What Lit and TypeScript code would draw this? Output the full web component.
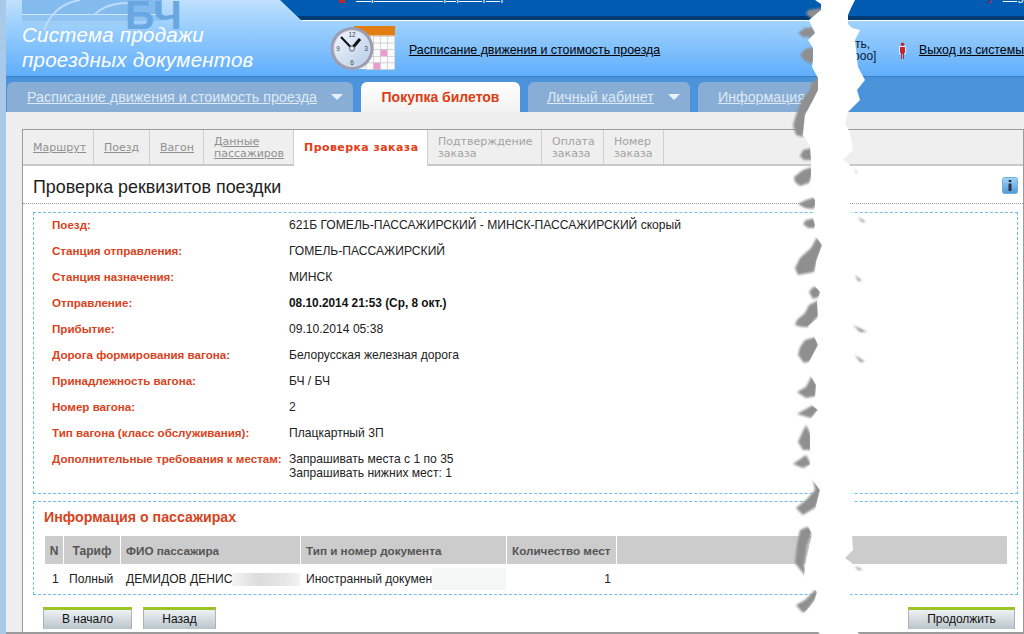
import { LitElement, html, css, svg } from "lit";
import { customElement } from "lit/decorators.js";

const rows: [string, unknown, boolean?][] = [
  ["Поезд:", "621Б ГОМЕЛЬ-ПАССАЖИРСКИЙ - МИНСК-ПАССАЖИРСКИЙ скорый"],
  ["Станция отправления:", "ГОМЕЛЬ-ПАССАЖИРСКИЙ"],
  ["Станция назначения:", "МИНСК"],
  ["Отправление:", "08.10.2014 21:53 (Ср, 8 окт.)", true],
  ["Прибытие:", "09.10.2014 05:38"],
  ["Дорога формирования вагона:", "Белорусская железная дорога"],
  ["Принадлежность вагона:", "БЧ / БЧ"],
  ["Номер вагона:", "2"],
  ["Тип вагона (класс обслуживания):", "Плацкартный 3П"],
  ["Дополнительные требования к местам:", html`Запрашивать места с 1 по 35<br />Запрашивать нижних мест: 1`],
];

const steps = [
  { t: "Маршрут", w: 71, link: true },
  { t: "Поезд", w: 56, link: true },
  { t: "Вагон", w: 54, link: true },
  { t: html`Данные<br />пассажиров`, w: 90, link: true },
  { t: "Проверка заказа", w: 134, active: true },
  { t: html`Подтверждение<br />заказа`, w: 114 },
  { t: html`Оплата<br />заказа`, w: 62 },
  { t: html`Номер<br />заказа`, w: 60 },
];

const blobs = [
  "822,8 808,10 806,14 811,18 822,18",
  "816,27 805,28 798,33 803,37 809,37 812,42 816,36",
  "814,47 805,49 800,55 804,60 810,64 814,62",
  "819,76 811,84 810,90 803,98 797,112 793,125 796,135 803,137 806,115 814,100 819,90",
  "812,148 803,150 800,156 804,160 812,160",
  "812,167 803,170 794,177 795,182 800,186 809,183 812,175",
  "816,197 806,200 798,204 805,208 813,209 816,205",
  "816,218 806,220 803,224 808,228 816,228",
  "817,237 823,245 818,258 814,272 798,275 795,268 800,258 811,248",
  "813,287 809,292 813,299 821,296 820,287",
  "819,300 809,305 805,313 797,320 795,325 802,327 809,327 819,315",
  "816,337 805,340 800,347 798,355 804,363 811,361 819,345",
  "812,375 817,385 816,396 806,398 797,392 806,387",
  "813,405 819,409 811,418 797,414",
  "806,425 802,433 798,442 803,450 811,450 811,435",
  "806,455 793,464 803,468 811,464",
  "813,478 821,490 816,507 803,515 796,508 806,500 815,490",
  "807,527 813,530 807,545 804,565 806,577 795,563 797,545 800,530",
  "818,587 805,600 796,605 802,612 806,612 816,598",
];

const leftEdge =
  "815,0 821,4 821,10 815,15 809,20 812,27 815,33 808,40 813,48 813,60 812,67 818,78 818,90 813,100 805,115 803,135 810,146 811,160 811,180 808,190 815,200 815,208 812,215 815,225 813,232 822,245 816,262 815,275 812,283 820,292 817,302 818,318 808,326 812,332 818,345 810,360 806,368 816,385 815,398 808,402 818,410 810,420 810,450 810,465 805,470 820,490 815,510 806,520 812,535 806,560 804,577 810,585 817,592 814,602 805,612 812,625 820,634";
const rightEdge =
  "860,634 858,633 850,594 852,563 845,558 853,550 852,535 854,501 852,493 852,212 850,204 850,165 843,160 853,150 850,133 845,123 848,112 860,100 857,90 865,80 858,67 855,40 860,30 852,28 848,24 848,15 851,8 855,0";
const slivers = [
  "855,168 857,173 856,173",
  "858,217 866,222 862,222",
  "855,275 862,281 858,281",
  "853,325 867,332 860,332",
  "855,355 865,362 860,362",
  "855,566 863,570 858,570",
];

@customElement("app-root")
export class AppRoot extends LitElement {
  static styles = css`
    :host {
      display: block;
      width: 1024px;
      height: 634px;
      position: relative;
      overflow: hidden;
      background: #a8c9e7;
      font-family: "Liberation Sans", Arial, sans-serif;
      font-size: 12px;
      color: #111;
    }
    a { color: inherit; }
    .shell {
      box-sizing: border-box;
      margin-left: 6px;
      height: 634px;
      background: #eeeeee;
      border-bottom: 2px solid #9b9b9b;
      display: flex;
      flex-direction: column;
    }
    .header {
      position: relative;
      height: 76px;
      flex: none;
      background: linear-gradient(#c0e0fd 0, #9dd0fd 25px, #60aefb 76px);
    }
    .logo { position: absolute; left: 16px; top: 0; }
    .logo text { font-family: "Liberation Sans", sans-serif; font-weight: 700; font-size: 41px; fill: #69a7e2; }
    .topbar {
      position: relative;
      height: 21px;
      margin-left: 274px;
      overflow: hidden;
      display: flex;
      padding-left: 59px;
      color: #fff;
      background: linear-gradient(#005bb1 0 16px, #003b74 16px 20px, #fff 20px 21px);
      clip-path: polygon(0 0, 100% 0, 100% 100%, 22px 100%);
    }
    .topbar > * { margin-top: -11px; line-height: 14px; font-size: 12px; height: 14px; white-space: nowrap; }
    .flag { width: 6px; background: #c3262b; margin-right: 11px; }
    .toplink { color: #fff; width: 154px; overflow: hidden; }
    .date { margin-left: 373px; width: 87px; }
    .lang { margin-left: 16px; color: #e4002b; width: 24px; }
    .eng { color: #fff; }
    .brand {
      position: relative;
      flex: 1;
      height: 55px;
      display: flex;
      align-items: center;
    }
    .title {
      width: 310px;
      margin-left: 16px;
      margin-top: -3px;
      color: #fff;
      font: italic 20.5px/25px "Liberation Sans", sans-serif;
      letter-spacing: 0.25px;
    }
    .clock { width: 66px; height: 46px; margin-left: 2px; margin-top: -1px; flex: none; }
    .brand-link { margin-left: 13px; width: 440px; font-size: 12.4px; color: #000; margin-top: 3px; }
    .who { width: 27px; line-height: 12px; text-align: right; font-size: 12px; color: #0a1a33; margin-top: 2px; }
    .person { margin-left: 29px; margin-top: 3px; flex: none; }
    .logout { margin-left: 13px; white-space: nowrap; font-size: 12.3px; color: #000; margin-top: 3px; }
    .nav {
      flex: none;
      height: 36px;
      box-sizing: border-box;
      background: #4b94db;
      border-top: 1px solid #3b7fc4;
      padding: 5px 0 0 1px;
      display: flex;
      gap: 8px;
    }
    .tab {
      box-sizing: border-box;
      height: 30px;
      border-radius: 6px 6px 0 0;
      background: #88aed5;
      color: #dfeaf5;
      font-size: 14.2px;
      line-height: 29px;
      padding-left: 20px;
      white-space: nowrap;
      display: flex;
      align-items: center;
    }
    .tab.first { font-size: 14.3px; }
    .tab.on {
      background: linear-gradient(#fff, #f2f2f2);
      color: #de3c12;
      font-size: 14px;
      font-weight: 700;
      justify-content: center;
      padding: 0;
    }
    .tri { width: 0; height: 0; margin-left: 14px; border: 6px solid transparent; border-top: 6px solid #e8f0f8; border-bottom: 0; }
    .panel {
      box-sizing: border-box;
      margin: 17px 0 0 16px;
      flex: 1;
      background: #fff;
      border: 1px solid #9b9b9b;
      border-bottom: 0;
      display: flex;
      flex-direction: column;
    }
    .steps {
      height: 36px;
      flex: none;
      box-sizing: border-box;
      background: #efefef;
      border-bottom: 2px solid #c9c9c9;
      display: flex;
      font-family: "DejaVu Sans", Verdana, sans-serif;
      font-size: 11px;
      line-height: 12px;
      color: #a3a3a3;
    }
    .step {
      box-sizing: border-box;
      height: 34px;
      border-right: 1px solid #cfcfcf;
      padding: 2px 0 0 10px;
      display: flex;
      align-items: center;
      white-space: nowrap;
    }
    .step.link { color: #8f8f8f; text-decoration: underline; }
    .step.active {
      height: 36px;
      background: #fff;
      color: #e43d16;
      font-weight: 700;
      text-decoration: none;
      letter-spacing: 0.42px;
      padding: 1px 0 1px 10px;
      border-right: 1px solid #cfcfcf;
    }
    .heading {
      height: 38px;
      flex: none;
      box-sizing: border-box;
      display: flex;
      align-items: center;
      justify-content: space-between;
      padding: 4px 5px 0 10px;
      border-bottom: 1px dotted #9a9a9a;
    }
    h1 { margin: 0; font-weight: 400; font-size: 17.9px; line-height: 22px; color: #222; }
    .info { margin-top: -3px; }
    .box {
      flex: none;
      margin: 7px 5px 0 10px;
      border: 1px dashed #6fbcf0;
    }
    .details { height: 282px; margin-top: 8px; box-sizing: border-box; padding: 0 0 0 18px; }
    .row {
      display: grid;
      grid-template-columns: 237px 1fr;
      min-height: 26px;
      align-items: start;
      line-height: 14px;
      padding-top: 5px;
      box-sizing: border-box;
      color: #222;
      font-size: 12.1px;
    }
    .row b { color: #d8431c; font-size: 11.6px; white-space: nowrap; }
    .row .strong { font-weight: 700; color: #111; font-size: 11.85px; }
    .passengers { height: 94px; box-sizing: border-box; padding: 0 10px 0 11px; }
    h2 { margin: 7px 0 0 -1px; font-size: 14.2px; line-height: 17px; color: #d8431c; }
    .grid {
      margin-top: 10px;
      display: grid;
      grid-template-columns: 18px 56px 179px 205px 109px 1fr;
      column-gap: 1px;
    }
    .th {
      height: 28px;
      line-height: 30px;
      background: #cccccc;
      color: #555;
      font-weight: 700;
      font-size: 11.7px;
      padding-left: 5px;
      white-space: nowrap;
      overflow: hidden;
    }
    .th.c { padding: 0; text-align: center; font-size: 12px; }
    .td {
      height: 30px;
      line-height: 30px;
      padding-left: 5px;
      white-space: nowrap;
      overflow: hidden;
      color: #222;
      font-size: 12.1px;
    }
    .td.n { padding-left: 7px; }
    .td.tariff { padding-left: 5px; }
    .td.r { padding: 0 5px 0 0; text-align: right; }
    .blur {
      display: inline-block;
      vertical-align: middle;
      height: 13px;
      margin-top: -1px;
      background: #f1f1f1;
    }
    .blur.a { width: 68px; background: linear-gradient(90deg, #f4f4f4, #dcdcdc 40%, #e6e6e6 75%, #f3f3f3); }
    .blur.b { width: 74px; height: 22px; background: #f5f7f6; }
    .actions { display: flex; padding: 12px 8px 0 20px; gap: 11px; }
    .btn {
      box-sizing: border-box;
      height: 22px;
      border-top: 3px solid #9ac325;
      border-left: 1px solid #b2b2b2;
      border-right: 1px solid #b2b2b2;
      background: linear-gradient(#eef1f3, #b9c5cc);
      text-align: center;
      line-height: 19px;
      font-size: 12px;
      color: #111;
    }
    .push { margin-left: auto; }
    .tear { position: absolute; left: 0; top: 0; pointer-events: none; }
  `;

  render() {
    return html`
      <div class="shell">
        <div class="header">
          <svg class="logo" width="170" height="32" viewBox="0 0 170 32">
            <rect x="0" y="0" width="140" height="14" fill="#84bbee" />
            <rect x="0" y="15" width="140" height="6" fill="#8ec3f2" />
            <rect x="0" y="22" width="108" height="3" fill="#9dcdf6" />
            <rect x="0" y="14" width="140" height="1" fill="#cfe7fd" />
            <path d="M22 30C28 14 40 3 58 0M72 15C80 7 92 3 106 3H128" fill="none" stroke="#bcdcfb" stroke-width="2" />
            <text x="103" y="29">БЧ</text>
          </svg>
          <div class="topbar">
            <span class="flag"></span>
            <a class="toplink" href="#">Справочная информация дороги</a>
            <span class="date">Реквизиты 2014 г.</span>
            <span class="lang">Рус</span>
            <a class="eng" href="#">Eng</a>
          </div>
          <div class="brand">
            <div class="title">Система продажи<br />проездных документов</div>
            ${this.clock()}
            <a class="brand-link" href="#">Расписание движения и стоимость проезда</a>
            <div class="who">ать,<br />[dooo]</div>
            <svg class="person" width="7" height="17" viewBox="0 0 7 17">
              <rect x="0" y="4" width="7" height="8" fill="#fff" opacity=".7" />
              <circle cx="3.5" cy="2.2" r="1.8" fill="#c4272b" />
              <path d="M1 5h5v6H5v6H4v-5H3v5H2v-6H1z" fill="#c4272b" />
            </svg>
            <a class="logout" href="#">Выход из системы</a>
          </div>
        </div>
        <div class="nav">
          <a class="tab first" style="width:346px" href="#"><u>Расписание движения и стоимость проезда</u><span class="tri"></span></a>
          <div class="tab on" style="width:159px">Покупка билетов</div>
          <a class="tab" style="width:162px;padding-left:19px" href="#"><u>Личный кабинет</u><span class="tri"></span></a>
          <a class="tab" style="width:125px" href="#"><u>Информация</u></a>
        </div>
        <div class="panel">
          <div class="steps">
            ${steps.map(
              (s) => html`<div class="step ${s.link ? "link" : ""} ${s.active ? "active" : ""}" style="width:${s.w}px"><span>${s.t}</span></div>`
            )}
          </div>
          <div class="heading">
            <h1>Проверка реквизитов поездки</h1>
            <svg class="info" width="16" height="17" viewBox="0 0 16 17">
              <defs><linearGradient id="ig" x1="0" y1="0" x2="0" y2="1"><stop offset="0" stop-color="#a5d3f5" /><stop offset="1" stop-color="#4c9ad8" /></linearGradient></defs>
              <rect x=".5" y=".5" width="15" height="16" rx="2" fill="url(#ig)" stroke="#6fb0e2" />
              <rect x="6.8" y="3" width="2.4" height="2" fill="#223" />
              <rect x="6.5" y="6.5" width="3" height="7.5" fill="#334" />
            </svg>
          </div>
          <div class="box details">
            ${rows.map(
              ([k, v, strong]) => html`<div class="row"><b>${k}</b><span class=${strong ? "strong" : ""}>${v}</span></div>`
            )}
          </div>
          <div class="box passengers">
            <h2>Информация о пассажирах</h2>
            <div class="grid">
              <div class="th c">N</div>
              <div class="th c">Тариф</div>
              <div class="th">ФИО пассажира</div>
              <div class="th">Тип и номер документа</div>
              <div class="th">Количество мест</div>
              <div class="th"></div>
              <div class="td n">1</div>
              <div class="td tariff">Полный</div>
              <div class="td">ДЕМИДОВ ДЕНИС<span class="blur a"></span></div>
              <div class="td">Иностранный докумен<span class="blur b"></span></div>
              <div class="td r">1</div>
              <div class="td"></div>
            </div>
          </div>
          <div class="actions">
            <div class="btn" style="width:89px">В начало</div>
            <div class="btn" style="width:73px">Назад</div>
            <div class="btn push" style="width:107px">Продолжить</div>
          </div>
        </div>
      </div>
      ${this.tear()}
    `;
  }

  clock() {
    const cells = [];
    for (let r = 0; r < 5; r++)
      for (let c = 0; c < 4; c++) {
        const pink = (r === 1 && c === 0) || (r === 2 && c === 2) || (r === 4 && c === 1);
        cells.push(svg`<rect x=${36.5 + c * 7} y=${11.5 + r * 6.6} width="7" height="6.6" fill=${pink ? "#ee9ad0" : "#fbfbfb"} stroke="#c9c9c9" stroke-width=".6" />`);
      }
    return html`<svg class="clock" viewBox="0 0 66 46">
      <defs>
        <linearGradient id="cf" x1="0" y1="0" x2="1" y2="1"><stop offset="0" stop-color="#f2f7fd" /><stop offset="1" stop-color="#b7cde9" /></linearGradient>
      </defs>
      <rect x="24" y="1" width="41" height="43" fill="#f3f3f3" />
      <rect x="24" y="1" width="41" height="9.5" fill="#e27e11" />
      ${cells}
      <circle cx="22" cy="23.5" r="21.5" fill="#9c9cb2" />
      <circle cx="22" cy="23.5" r="18" fill="url(#cf)" stroke="#d9dbe4" stroke-width="1" />
      <g font-family="Liberation Sans" font-size="6.5" fill="#445" text-anchor="middle">
        <text x="22" y="11.5">12</text><text x="36" y="26">3</text><text x="22" y="40">6</text><text x="8" y="26">9</text>
      </g>
      <path d="M22 23.5L11 12" stroke="#111" stroke-width="2" />
      <path d="M22 23.5L30 14" stroke="#111" stroke-width="3" />
      <circle cx="22" cy="23.5" r="2.6" fill="#dfe6f2" stroke="#445" stroke-width=".8" />
    </svg>`;
  }

  tear() {
    return html`<svg class="tear" width="1024" height="634" viewBox="0 0 1024 634">
      <defs><filter id="sb" x="-20%" y="-20%" width="140%" height="140%"><feGaussianBlur stdDeviation="1" /></filter></defs>
      <g fill="#8f8f8f" filter="url(#sb)">
        ${blobs.map((p) => svg`<polygon points=${p} />`)}
        ${slivers.map((p) => svg`<polygon points=${p} />`)}
      </g>
      <polygon points="${leftEdge} ${rightEdge}" fill="#fff" />
    </svg>`;
  }
}
